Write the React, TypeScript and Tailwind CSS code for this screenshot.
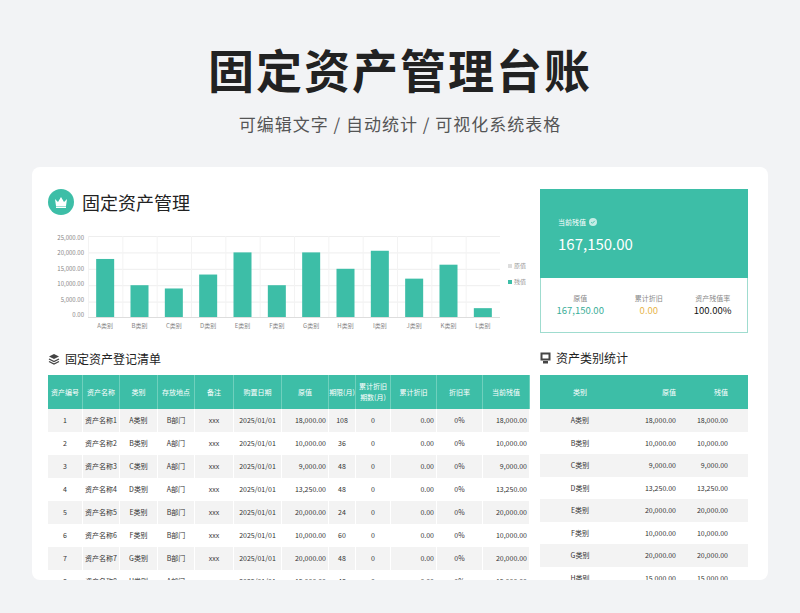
import React from "react";

const T = "#3dbea7";
const cats = ["A","B","C","D","E","F","G","H","I","J","K","L"];
const vals = [18000,10000,9000,13250,20000,10000,20000,15000,20500,12000,16250,3000];
const rows = [
  [1,"资产名称1","A类别","B部门","2025/01/01","18,000.00",108,"18,000.00"],
  [2,"资产名称2","B类别","A部门","2025/01/01","10,000.00",36,"10,000.00"],
  [3,"资产名称3","C类别","A部门","2025/01/01","9,000.00",48,"9,000.00"],
  [4,"资产名称4","D类别","A部门","2025/01/01","13,250.00",48,"13,250.00"],
  [5,"资产名称5","E类别","B部门","2025/01/01","20,000.00",24,"20,000.00"],
  [6,"资产名称6","F类别","B部门","2025/01/01","10,000.00",60,"10,000.00"],
  [7,"资产名称7","G类别","B部门","2025/01/01","20,000.00",48,"20,000.00"],
  [8,"资产名称8","H类别","A部门","2025/01/01","15,000.00",48,"15,000.00"],
];
const stats = [["A类别","18,000.00"],["B类别","10,000.00"],["C类别","9,000.00"],["D类别","13,250.00"],["E类别","20,000.00"],["F类别","10,000.00"],["G类别","20,000.00"],["H类别","15,000.00"]];
const widths = [35,37,38,37,39,48,47,27,35,46,46,47];
const heads = ["资产编号","资产名称","类别","存放地点","备注","购置日期","原值","期限(月)","累计折旧期数(月)","累计折旧","折旧率","当前残值"];

function Chart() {
  const W = 412, H = 82;
  const bw = 18, step = W / 12;
  return (
    <div className="flex h-[100px] mt-[21px]">
      <div className="w-[40px] flex flex-col justify-between items-end text-[6px] text-[#888] pr-[4px] h-[86px] -mt-[3px]">
        {["25,000.00","20,000.00","15,000.00","10,000.00","5,000.00","0.00"].map(s => <div key={s}>{s}</div>)}
      </div>
      <div className="relative">
        <svg width={W} height={H} className="block">
          {[0,1,2,3,4,5].map(i => <line key={i} x1={0} x2={W} y1={i*H/5+0.5} y2={i*H/5+0.5} stroke="#eee" />)}
          {cats.map((c,i) => <line key={c} x1={i*step+0.5} x2={i*step+0.5} y1={0} y2={H} stroke="#f3f3f3" />)}
          {vals.map((v,i) => {
            const h = v/25000*H;
            return <rect key={i} x={i*step+(step-bw)/2} y={H-h} width={bw} height={h} fill={T} />;
          })}
          <line x1={0} x2={W} y1={H-0.5} y2={H-0.5} stroke="#ddd" />
        </svg>
        <div className="flex text-[6px] text-[#888] mt-[3px]">
          {cats.map(c => <div key={c} className="text-center" style={{width: step}}>{c}类别</div>)}
        </div>
      </div>
      <div className="ml-[8px] pt-[22px] text-[6px] text-[#999] leading-[16px]">
        <div className="flex items-center gap-[2px]"><span className="w-[4px] h-[4px] bg-[#ddd] inline-block"/>原值</div>
        <div className="flex items-center gap-[2px]"><span className="w-[4px] h-[4px] inline-block" style={{background:T}}/>残值</div>
      </div>
    </div>
  );
}

export default function App() {
  return (
    <div className="w-[800px] h-[613px] bg-[#f2f3f5] overflow-hidden" style={{fontFamily:'"Noto Sans CJK SC","Noto Sans",sans-serif'}}>
      <div className="text-center pt-[38px] text-[46px] font-bold text-[#222] leading-[60px] tracking-[2px]">固定资产管理台账</div>
      <div className="text-center mt-[14px] text-[17px] text-[#555] leading-[24px] tracking-[1px]">可编辑文字 / 自动统计 / 可视化系统表格</div>
      <div className="mx-[32px] mt-[31px] h-[413px] bg-white rounded-[8px] overflow-hidden flex px-[16px] pt-[22px] gap-[10px]">
        <div className="w-[482px]">
          <div className="flex items-center gap-[8px]">
            <div className="w-[26px] h-[26px] rounded-full flex items-center justify-center" style={{background:T}}>
              <svg width="14" height="12" viewBox="0 0 14 12"><path d="M1 3l3 3 3-5 3 5 3-3-1 7H2z" fill="#fff"/><rect x="2" y="10.5" width="10" height="1.5" fill="#fff"/></svg>
            </div>
            <div className="text-[18px] text-[#222] leading-[26px]">固定资产管理</div>
          </div>
          <Chart />
          <div className="flex items-center gap-[5px] mt-[14px] h-[18px]">
            <svg width="12" height="12" viewBox="0 0 12 12"><path d="M6 1l5 2.5-5 2.5-5-2.5z" fill="#444"/><path d="M1 6l5 2.5 5-2.5M1 8.5l5 2.5 5-2.5" stroke="#444" strokeWidth="1.3" fill="none"/></svg>
            <span className="text-[12px] text-[#222]">固定资产登记清单</span>
          </div>
          <div className="mt-[7px] text-[7px] whitespace-nowrap">
            <div className="flex h-[34px] text-white" style={{background:T}}>
              {heads.map((h,i) => (
                <div key={i} className="flex items-center justify-center text-center border-r border-[#6fd0bd] leading-[11px] overflow-hidden" style={{width:widths[i]}}>
                  {i===8 ? <span>累计折旧<br/>期数(月)</span> : h}
                </div>
              ))}
            </div>
            {rows.map((r,ri) => {
              const cells = [r[0],r[1],r[2],r[3],"xxx",r[4],r[5],r[6],0,"0.00","0%",r[7]];
              return (
                <div key={ri} className={"flex h-[23px] text-[#333] " + (ri%2===0 ? "bg-[#f3f3f3]" : "bg-white")}>
                  {cells.map((c,i) => (
                    <div key={i} className={"flex items-center border-r border-white px-[2px] overflow-hidden " + ([6,9,11].includes(i) ? "justify-end" : "justify-center")} style={{width:widths[i]}}>{c}</div>
                  ))}
                </div>
              );
            })}
          </div>
        </div>
        <div className="w-[208px]">
          <div className="h-[89px] px-[18px] pt-[28px] text-white" style={{background:T}}>
            <div className="flex items-center gap-[3px] text-[7px]">当前残值
              <svg width="8" height="8" viewBox="0 0 8 8"><circle cx="4" cy="4" r="4" fill="#fff" opacity="0.7"/><path d="M2.2 4.1l1.2 1.2 2.4-2.5" stroke={T} strokeWidth="0.9" fill="none"/></svg>
            </div>
            <div className="text-[15px] mt-[6px] leading-[20px]">167,150.00</div>
          </div>
          <div className="h-[55px] border border-t-0 border-[#9fdccf] flex justify-around items-center text-center">
            <div><div className="text-[7px] text-[#888]">原值</div><div className="text-[9.5px] text-[#3aae98]">167,150.00</div></div>
            <div><div className="text-[7px] text-[#888]">累计折旧</div><div className="text-[9.5px] text-[#e8b54a]">0.00</div></div>
            <div><div className="text-[7px] text-[#888]">资产残值率</div><div className="text-[9.5px] text-[#111]">100.00%</div></div>
          </div>
          <div className="flex items-center gap-[5px] mt-[16px] h-[18px]">
            <svg width="11" height="12" viewBox="0 0 11 12"><rect x="0.5" y="0.5" width="10" height="8" fill="#444"/><rect x="2.5" y="2.5" width="6" height="4" fill="#fff"/><rect x="3" y="9" width="5" height="2.5" fill="#444"/></svg>
            <span className="text-[12px] text-[#222]">资产类别统计</span>
          </div>
          <div className="mt-[8px] text-[7px]">
            <div className="flex h-[34px] text-white items-center" style={{background:T}}>
              <div className="w-[80px] text-center">类别</div>
              <div className="w-[60px] text-right pr-[4px]">原值</div>
              <div className="w-[68px] text-right pr-[20px]">残值</div>
            </div>
            {stats.map((s,i) => (
              <div key={i} className={"flex h-[22.5px] items-center text-[#333] " + (i%2===0 ? "bg-[#f3f3f3]" : "bg-white")}>
                <div className="w-[80px] text-center">{s[0]}</div>
                <div className="w-[60px] text-right pr-[4px]">{s[1]}</div>
                <div className="w-[68px] text-right pr-[20px]">{s[1]}</div>
              </div>
            ))}
          </div>
        </div>
      </div>
    </div>
  );
}
